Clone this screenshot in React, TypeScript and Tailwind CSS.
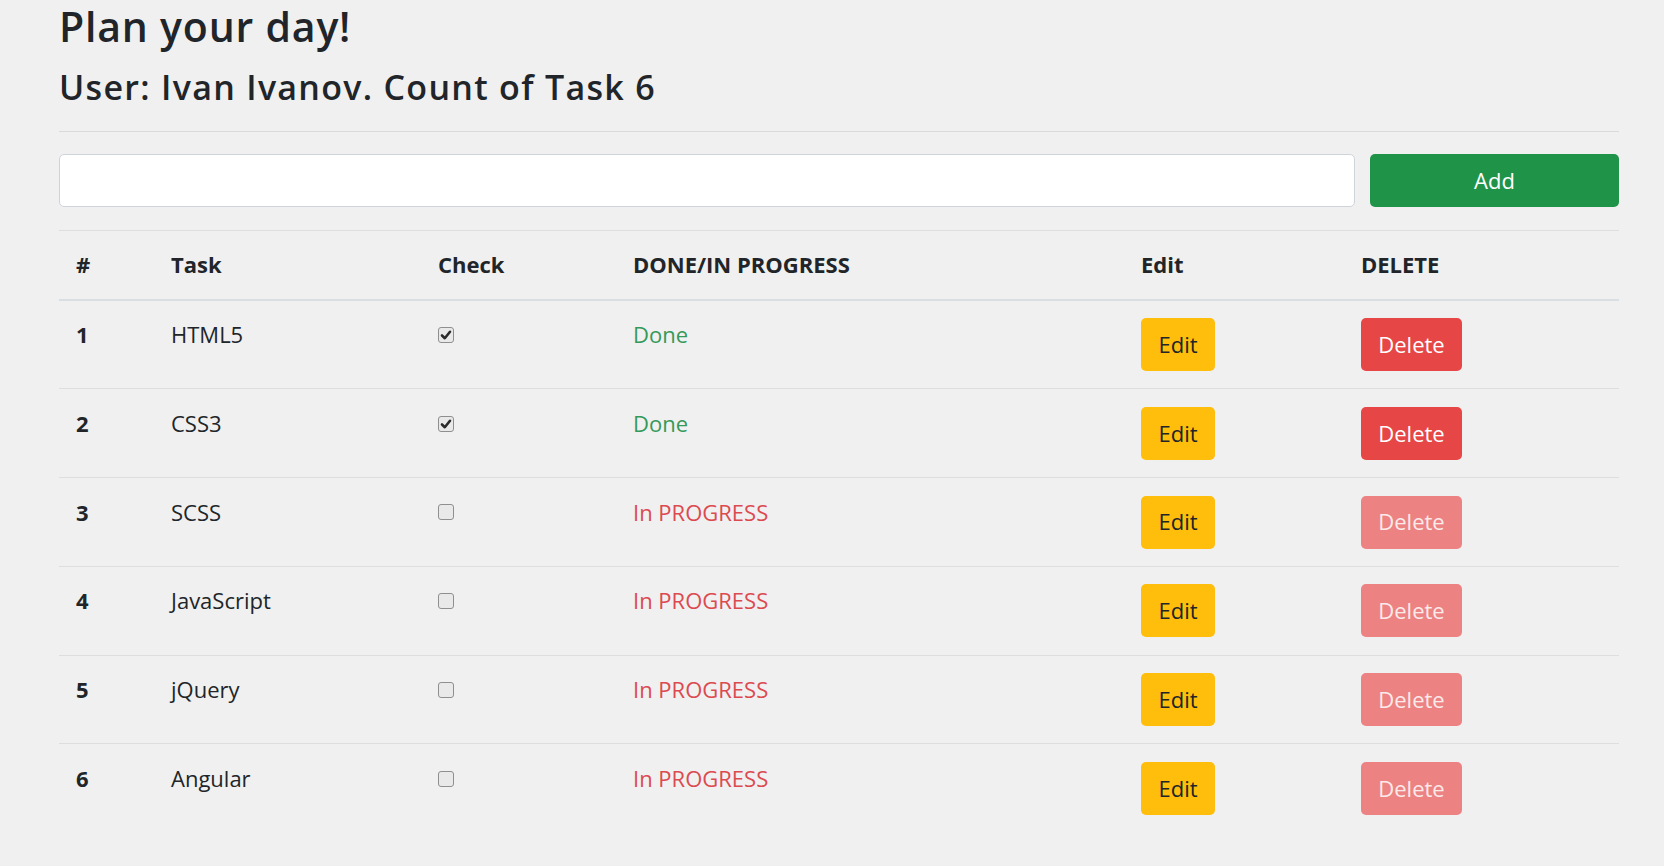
import React from 'react';

interface Task {
  id: number;
  title: string;
  done: boolean;
}

const tasks: Task[] = [
  { id: 1, title: 'HTML5', done: true },
  { id: 2, title: 'CSS3', done: true },
  { id: 3, title: 'SCSS', done: false },
  { id: 4, title: 'JavaScript', done: false },
  { id: 5, title: 'jQuery', done: false },
  { id: 6, title: 'Angular', done: false },
];

// чекбокс в стиле Chrome (серый, с галочкой)
const CheckBox: React.FC<{ checked: boolean }> = ({ checked }) => (
  <span className="inline-flex items-center justify-center w-[16px] h-[16px] rounded-[3px] border border-[#8f8f8f] bg-[#e9e9e9]">
    {checked && (
      <svg width="12" height="12" viewBox="0 0 12 12">
        <path d="M2 6.5 L4.8 9.2 L10 2.8" fill="none" stroke="#2b2b2b" strokeWidth="2.6" strokeLinecap="round" strokeLinejoin="round" />
      </svg>
    )}
  </span>
);

const App: React.FC = () => {
  return (
    <div
      className="min-h-screen bg-[#f0f0f0] pl-[59px] pr-[45px] text-[#212529]"
      style={{ fontFamily: '"Open Sans", "Noto Sans", sans-serif' }}
    >
      {/* заголовки */}
      <h1 className="pt-[2px] text-[41px] leading-[49px] font-semibold tracking-[0.8px]">Plan your day!</h1>
      <h2 className="mt-[16px] text-[34px] leading-[41px] font-semibold tracking-[1.3px]">
        User: Ivan Ivanov. Count of Task {tasks.length}
      </h2>
      <hr className="mt-[23px] border-0 border-t border-[#dadada]" />

      {/* форма добавления */}
      <div className="mt-[22px] flex gap-[15px]">
        <input className="flex-1 h-[53px] rounded-[5px] border border-[#cfd4da] bg-white px-3 text-[22px] outline-none" />
        <button className="w-[249px] h-[53px] rounded-[5px] bg-[#1f9347] text-white text-[22px]">Add</button>
      </div>

      {/* таблица задач */}
      <table className="mt-[23px] w-full table-fixed border-collapse text-[22px] leading-[33.6px]">
        <colgroup>
          <col className="w-[95px]" />
          <col className="w-[267px]" />
          <col className="w-[195px]" />
          <col className="w-[508px]" />
          <col className="w-[220px]" />
          <col />
        </colgroup>
        <thead>
          <tr className="border-t border-[#dedede] border-b-2 border-b-[#d9dee3]">
            {['#', 'Task', 'Check', 'DONE/IN PROGRESS', 'Edit', 'DELETE'].map((h) => (
              <th key={h} className="px-[17px] pt-[17px] pb-[17px] text-left font-bold align-top">
                {h}
              </th>
            ))}
          </tr>
        </thead>
        <tbody>
          {tasks.map((t, i) => (
            <tr key={t.id} className={i > 0 ? 'border-t border-[#dedede]' : ''}>
              <td className="px-[17px] pt-[17.5px] pb-[17.25px] align-top font-bold">{t.id}</td>
              <td className="px-[17px] pt-[17.5px] pb-[17.25px] align-top">{t.title}</td>
              <td className="px-[17px] pt-[17.5px] pb-[17.25px] align-top">
                <div className="flex h-[33.6px] items-center">
                  <CheckBox checked={t.done} />
                </div>
              </td>
              <td className="px-[17px] pt-[17.5px] pb-[17.25px] align-top">
                {t.done ? (
                  <span className="text-[#35995a]">Done</span>
                ) : (
                  <span className="text-[#dc4a4f]">In PROGRESS</span>
                )}
              </td>
              <td className="px-[17px] pt-[17.5px] pb-[17.25px] align-top">
                <button className="w-[74px] h-[53px] rounded-[5px] bg-[#ffbe0b] text-[#212529]">Edit</button>
              </td>
              <td className="px-[17px] pt-[17.5px] pb-[17.25px] align-top">
                <button
                  className={
                    t.done
                      ? 'w-[101px] h-[53px] rounded-[5px] bg-[#e64646] text-white'
                      : 'w-[101px] h-[53px] rounded-[5px] bg-[#ed8282] text-[#fbeaea]'
                  }
                >
                  Delete
                </button>
              </td>
            </tr>
          ))}
        </tbody>
      </table>
    </div>
  );
};

export default App;
